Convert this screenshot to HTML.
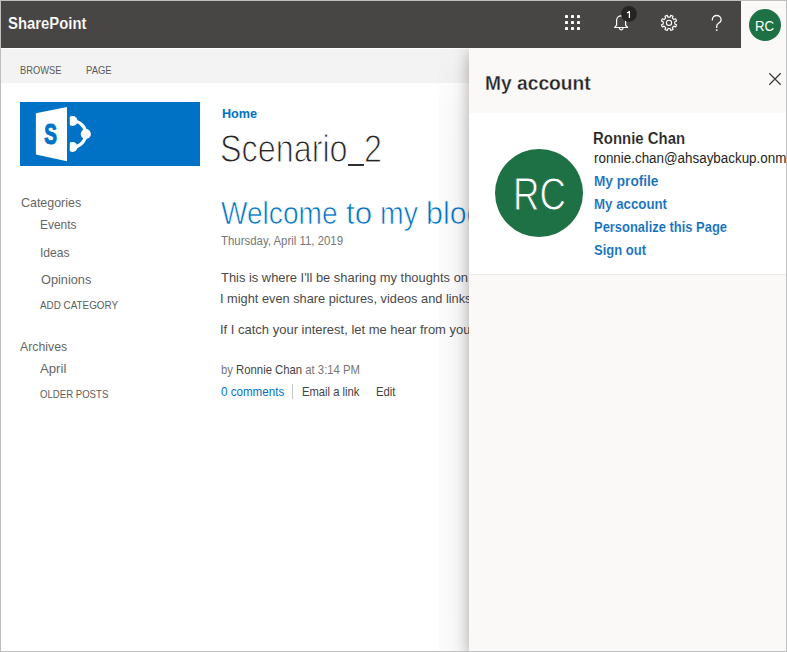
<!DOCTYPE html>
<html><head>
<meta charset="utf-8">
<title>SharePoint</title>
<style>
  html, body { margin: 0; padding: 0; }
  body {
    width: 787px; height: 652px; overflow: hidden; position: relative;
    background: #ffffff;
    font-family: "Liberation Sans", sans-serif;
    color: #444;
  }
  .t { position: absolute; white-space: nowrap; line-height: 1; transform-origin: 0 0; }
  svg { position: absolute; overflow: visible; }
  #frame { position: absolute; left: 0; top: 0; width: 785px; height: 650px; border: 1px solid #bfbfbf; z-index: 50; }
  #topbar { position: absolute; left: 0; top: 0; width: 741px; height: 48px; background: #484644; z-index: 20; }
  #avcell { position: absolute; left: 741px; top: 0; width: 46px; height: 48px; background: #faf9f8; z-index: 20; }
  #avsmall { position: absolute; left: 749px; top: 8.5px; width: 32px; height: 32px; border-radius: 50%; background: #1e7145; z-index: 21; }
  #ribbon { position: absolute; left: 0; top: 49px; width: 787px; height: 34px; background: #f3f3f3; }
  .rt { font-size: 11px; color: #5a5a5a; }
  .nav { color: #666; font-size: 13.3px; }
  .navs { color: #5c5c5c; font-size: 11px; }
  .body { color: #4a4a4a; font-size: 13.3px; }
  .small { color: #777; font-size: 12.4px; }
  .light { -webkit-text-stroke: 1.1px #fff; }
  .wl { font-size: 31.4px; color: #0072c6; -webkit-text-stroke-width: .7px; }
  #pclip { position: absolute; left: 439px; top: 48px; width: 348px; height: 604px; overflow: hidden; z-index: 10; }
  #panel { position: absolute; left: 30px; top: 0; width: 318px; height: 604px; background: #faf9f8; box-shadow: rgba(0,0,0,.10) 0 25.6px 57.6px 0, rgba(0,0,0,.30) 0 4.8px 14.4px 0; z-index: 10; }
  #card { position: absolute; left: 469px; top: 113px; width: 318px; height: 161px; background: #fff; border-bottom: 1px solid #edebe9; z-index: 11; }
  .p { z-index: 12; }
  .plink { color: #106ebe; font-weight: bold; font-size: 14.4px; -webkit-text-stroke: .12px #fff; }
</style>
</head>
<body>
  <div id="topbar"></div>
  <div id="avcell"></div>
  <div id="avsmall"></div>
  <div class="t" style="font-size: 16.1px; font-weight: bold; color: rgb(255, 255, 255); -webkit-text-stroke: 0.15px rgb(72, 70, 68); z-index: 22; top: 15px; left: 8.03px; transform: scaleX(0.9235);">SharePoint</div>
  <div class="t" style="font-size: 15.5px; color: rgb(255, 255, 255); z-index: 22; top: 18px; left: 755.35px; transform: scaleX(0.854);">RC</div>

  <!-- top bar icons -->
  <svg style="left:0; top:0; z-index:22;" width="787" height="48" viewBox="0 0 787 48">
    <g fill="#fff">
      <rect x="565" y="15" width="3" height="3" rx=".4"></rect><rect x="571" y="15" width="3" height="3" rx=".4"></rect><rect x="577" y="15" width="3" height="3" rx=".4"></rect>
      <rect x="565" y="21" width="3" height="3" rx=".4"></rect><rect x="571" y="21" width="3" height="3" rx=".4"></rect><rect x="577" y="21" width="3" height="3" rx=".4"></rect>
      <rect x="565" y="27" width="3" height="3" rx=".4"></rect><rect x="571" y="27" width="3" height="3" rx=".4"></rect><rect x="577" y="27" width="3" height="3" rx=".4"></rect>
    </g>
    <g fill="none" stroke="#fff" stroke-width="1.2" stroke-linejoin="round" stroke-linecap="round">
      <path d="M614.7 27.5 L616.6 25.2 V20.4 a4.5 4.5 0 0 1 9 0 V25.2 L627.6 27.5 Z"></path>
      <path d="M619.4 28 a1.8 1.8 0 0 0 3.6 0"></path>
    </g>
    <circle cx="629" cy="13.9" r="7.9" fill="#252423"></circle>
    <path d="M627.1 13.1 L629.4 11.5 V18" fill="none" stroke="#fff" stroke-width="1.25" stroke-linejoin="round"></path>
    <g transform="translate(669 22.85)" fill="none" stroke="#fff" stroke-width="1.15" stroke-linejoin="round">
      <path d="M7.58 1.82L6.65 4.08L4.91 3.28L3.28 4.91L4.08 6.65L1.82 7.58L1.15 5.79L-1.15 5.79L-1.82 7.58L-4.08 6.65L-3.28 4.91L-4.91 3.28L-6.65 4.08L-7.58 1.82L-5.79 1.15L-5.79 -1.15L-7.58 -1.82L-6.65 -4.08L-4.91 -3.28L-3.28 -4.91L-4.08 -6.65L-1.82 -7.58L-1.15 -5.79L1.15 -5.79L1.82 -7.58L4.08 -6.65L3.28 -4.91L4.91 -3.28L6.65 -4.08L7.58 -1.82L5.79 -1.15L5.79 1.15Z"></path>
      <circle cx="0" cy="0" r="2.6"></circle>
    </g>
    <g fill="none" stroke="#fff" stroke-width="1.3" stroke-linecap="round">
      <path d="M712.3 19.9 A4.4 4.4 0 0 1 721.1 19.9 C721.1 23.2 716.7 22.9 716.7 26.2 V27.4"></path>
    </g>
    <circle cx="716.7" cy="30.1" r=".9" fill="#fff"></circle>
  </svg>

  <div id="ribbon"></div>
  <div class="t rt" style="top: 65px; left: 20.3px; transform: scaleX(0.8464);">BROWSE</div>
  <div class="t rt" style="top: 65px; left: 85.8px; transform: scaleX(0.8635);">PAGE</div>

  <!-- site logo -->
  <svg style="left:20px; top:102px;" width="180" height="64" viewBox="0 0 180 64">
    <rect width="180" height="64" fill="#0072c6"></rect>
    <polygon points="15.9,11.2 47,4.9 47,59.2 15.9,52.5" fill="#fff"></polygon>
    <text transform="translate(24.2 41.7) scale(.665 1)" font-family="Liberation Sans, sans-serif" font-weight="bold" font-size="28.6" fill="#0072c6" stroke="#0072c6" stroke-width="1.1">S</text>
    <path d="M52.5 19 A13.2 13.2 0 0 1 65.8 32 A13.2 13.2 0 0 1 52.5 45" fill="none" stroke="#fff" stroke-width="3.2"></path>
    <circle cx="52.5" cy="19" r="5" fill="#fff"></circle>
    <circle cx="65.8" cy="32" r="5.1" fill="#fff"></circle>
    <circle cx="52.5" cy="45" r="5" fill="#fff"></circle>
    <rect x="47" y="10" width="2.8" height="44" fill="#0072c6"></rect>
  </svg>

  <div class="t" style="font-size: 13.1px; font-weight: bold; color: rgb(0, 114, 198); top: 107px; left: 221.7px; transform: scaleX(0.9641);">Home</div>
  <div class="t light" style="font-size: 39.2px; color: rgb(38, 38, 38); top: 129px; left: 220.33px; transform: scaleX(0.8249);">Scenario</div>
  <div class="t light" style="font-size: 39.2px; color: rgb(38, 38, 38); top: 129px; left: 363.82px; transform: scaleX(0.8263);">2</div>
  <div style="position:absolute; left:348.3px; top:164px; width:15.3px; height:1.7px; background:#303030;"></div>
  <div class="t light wl" style="top: 198px; left: 220.85px; transform: scaleX(0.8945);">Welcome</div>
  <div class="t light wl" style="top: 198px; left: 345.55px; transform: scaleX(0.9992);">to</div>
  <div class="t light wl" style="top: 198px; left: 379.84px; transform: scaleX(0.9041);">my</div>
  <div class="t light wl" style="top: 198px; left: 425.91px; transform: scaleX(0.9688);">blog!</div>
  <div class="t small" style="top: 235px; left: 221.2px; transform: scaleX(0.9215);">Thursday, April 11, 2019</div>
  <div class="t body" style="top: 271px; left: 221.2px; transform: scaleX(0.9702);">This is where I'll be sharing my thoughts on topics that matter to me.</div>
  <div class="t body" style="top: 292px; left: 219.94px; transform: scaleX(0.9613);">I might even share pictures, videos and links to other interesting stuff.</div>
  <div class="t body" style="top: 323px; left: 219.92px; transform: scaleX(0.9768);">If I catch your interest, let me hear from you.</div>
  <div class="t small" style="top: 364px; left: 220.6px; transform: scaleX(0.9131);">by <span style="color:#444">Ronnie Chan</span> at 3:14 PM</div>
  <div class="t small" style="color: rgb(0, 114, 198); top: 386px; left: 220.6px; transform: scaleX(0.9363);">0 comments</div>
  <div class="t small" style="color: rgb(68, 68, 68); top: 386px; left: 301.79px; transform: scaleX(0.9057);">Email a link</div>
  <div class="t small" style="color: rgb(68, 68, 68); top: 386px; left: 375.99px; transform: scaleX(0.9135);">Edit</div>
  <div style="position:absolute; left:292px; top:384px; width:1px; height:15px; background:#c6c6c6;"></div>

  <div class="t nav" style="top: 196px; left: 20.5px; transform: scaleX(0.9357);">Categories</div>
  <div class="t nav" style="top: 218px; left: 39.8px; transform: scaleX(0.8975);">Events</div>
  <div class="t nav" style="top: 246px; left: 39.79px; transform: scaleX(0.9128);">Ideas</div>
  <div class="t nav" style="top: 273px; left: 40.7px; transform: scaleX(0.9578);">Opinions</div>
  <div class="t navs" style="top: 300px; left: 40.3px; transform: scaleX(0.8967);">ADD CATEGORY</div>
  <div class="t nav" style="top: 340px; left: 20.3px; transform: scaleX(0.9252);">Archives</div>
  <div class="t nav" style="top: 362px; left: 40.2px; transform: scaleX(0.9908);">April</div>
  <div class="t navs" style="top: 389px; left: 40.2px; transform: scaleX(0.8729);">OLDER POSTS</div>

  <!-- account panel -->
  <div id="pclip"><div id="panel"></div></div>
  <div id="card"></div>
  <div class="t p" style="font-size: 20.4px; font-weight: bold; color: rgb(37, 36, 35); -webkit-text-stroke: 0.3px rgb(250, 249, 248); top: 73px; left: 485.11px; transform: scaleX(0.9427);">My account</div>
  <svg class="p" style="left:769px; top:73px;" width="12" height="12" viewBox="0 0 12 12"><path d="M.3 .3 L11.7 11.7 M11.7 .3 L.3 11.7" stroke="#3b3a39" stroke-width="1.25" fill="none"></path></svg>
  <div class="p" style="position:absolute; left:495px; top:148.8px; width:88px; height:88px; border-radius:50%; background:#1e7145;"></div>
  <div class="t p" style="font-size: 47px; color: rgb(255, 255, 255); -webkit-text-stroke: 1px rgb(30, 113, 69); top: 170px; left: 512.66px; transform: scaleX(0.7788);">RC</div>
  <div class="t p" style="font-size: 15.7px; font-weight: bold; color: rgb(37, 36, 35); -webkit-text-stroke: 0.15px rgb(255, 255, 255); top: 131px; left: 592.87px; transform: scaleX(0.9516);">Ronnie Chan</div>
  <div class="t p" style="font-size: 14px; color: rgb(37, 36, 35); top: 151px; left: 593.9px; transform: scaleX(0.9567);">ronnie.chan@ahsaybackup.onmicrosoft.com</div>
  <div class="t p plink" style="top: 174px; left: 593.84px; transform: scaleX(0.9479);">My profile</div>
  <div class="t p plink" style="top: 197px; left: 593.84px; transform: scaleX(0.9225);">My account</div>
  <div class="t p plink" style="top: 220px; left: 593.84px; transform: scaleX(0.899);">Personalize this Page</div>
  <div class="t p plink" style="top: 243px; left: 593.84px; transform: scaleX(0.9041);">Sign out</div>

  <div id="frame"></div>


</body></html>
